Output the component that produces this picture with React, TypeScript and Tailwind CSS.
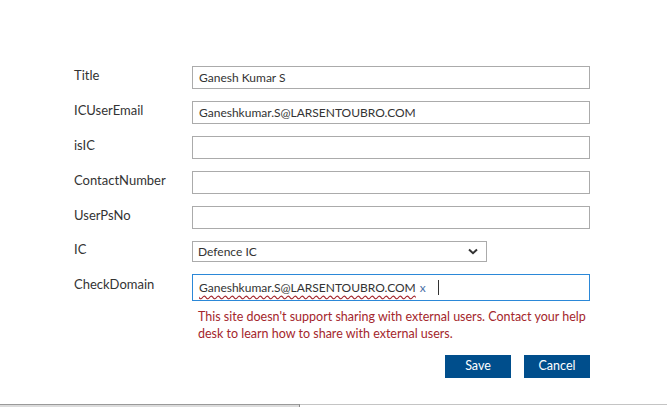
import React from "react";

const font = { fontFamily: '"Lato", "Noto Sans", sans-serif' };

function Row({ label, children, h = "h-[23px]" }: { label: string; children: React.ReactNode; h?: string }) {
  return (
    <div className="flex items-start mb-3">
      <div className={`w-[118px] shrink-0 flex items-center ${h} text-[13px] text-[#333] -mt-[2px]`}>{label}</div>
      {children}
    </div>
  );
}

function TextBox({ value }: { value?: string }) {
  return (
    <div className="w-[398px] h-[23px] border border-[#ababab] bg-white flex items-center pl-[6px] text-[12px] text-[#333]">
      {value}
    </div>
  );
}

export default function App() {
  return (
    <div className="w-[667px] h-[407px] bg-white flex flex-col overflow-hidden" style={font}>
      <div className="pl-[74px] pt-[66px]">
        <Row label="Title"><TextBox value="Ganesh Kumar S" /></Row>
        <Row label="ICUserEmail"><TextBox value="Ganeshkumar.S@LARSENTOUBRO.COM" /></Row>
        <Row label="isIC"><TextBox /></Row>
        <Row label="ContactNumber"><TextBox /></Row>
        <Row label="UserPsNo"><TextBox /></Row>
        <Row label="IC" h="h-[21px]">
          <div className="w-[295px] h-[21px] border border-[#ababab] bg-white flex items-center justify-between pl-[5px] pr-[8px] text-[12px] text-[#333]">
            <span>Defence IC</span>
            <svg width="10" height="7" viewBox="0 0 10 7">
              <path d="M1 1.5 L5 5.2 L9 1.5" fill="none" stroke="#333" strokeWidth="2" />
            </svg>
          </div>
        </Row>
        <div className="flex items-start">
          <div className="w-[118px] shrink-0 h-[22px] flex items-center text-[13px] text-[#333]">CheckDomain</div>
          <div className="flex flex-col">
            <div className="w-[398px] h-[27px] border border-[#2b88d8] bg-white flex items-center pl-[6px] text-[12px]">
              <span className="text-[#333] underline decoration-wavy decoration-[#a4262c] underline-offset-[3px]">
                Ganeshkumar.S@LARSENTOUBRO.COM
              </span>
              <span className="text-[#4a6fa5] ml-[4px]">x</span>
              <span className="ml-[12px] w-px h-[15px] bg-[#333]" />
            </div>
            <div className="mt-[7px] pl-[6px] text-[12.5px] leading-[17px] text-[#a4262c] w-[398px]">
              This site doesn't support sharing with external users. Contact your help desk to learn how to share with external users.
            </div>
            <div className="flex justify-end gap-[13px] mt-[13px]">
              <button className="w-[66px] h-[23px] bg-[#004e8c] text-white text-[12.5px]">Save</button>
              <button className="w-[66px] h-[23px] bg-[#004e8c] text-white text-[12.5px]">Cancel</button>
            </div>
          </div>
        </div>
      </div>
      <div className="mt-auto flex h-[3px]">
        <div className="w-[300px] border-t border-[#9a9a9a] bg-[#dcdcdc] border-r border-r-[#8a8a8a]" />
        <div className="flex-1 border-t border-[#c4c4c4]" />
      </div>
    </div>
  );
}
